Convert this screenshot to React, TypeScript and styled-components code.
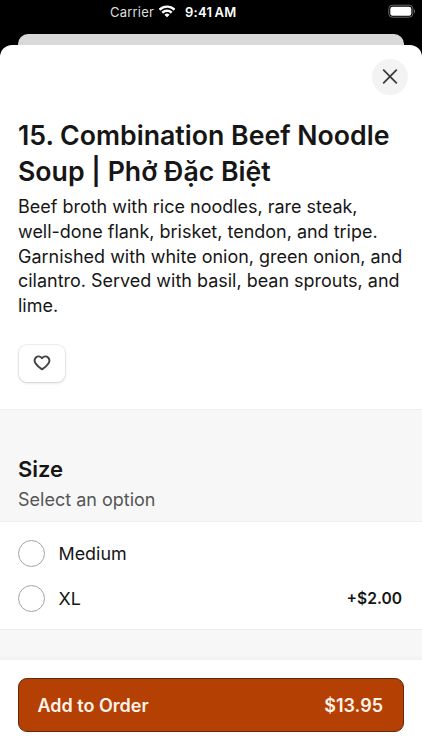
import React from 'react';
import styled, { createGlobalStyle } from 'styled-components';

const GlobalStyle = createGlobalStyle`
  *, *::before, *::after { box-sizing: border-box; }
  body { margin: 0; background: #000; }
  button { font: inherit; color: inherit; border: 0; padding: 0; margin: 0; }
  h1, h2, p { margin: 0; }
`;

const Screen = styled.div`
  width: 422px;
  height: 750px;
  overflow: hidden;
  display: flex;
  flex-direction: column;
  background: #000;
  color: #161616;
  font-family: Inter, 'Liberation Sans', sans-serif;
`;

const StatusBar = styled.div`
  height: 34px;
  padding: 4px 7px 0 110px;
  display: flex;
  align-items: flex-start;
  color: #fff;
  font-size: 13px;
  line-height: 16px;
  flex: none;
`;

const Carrier = styled.span`
  width: 48px;
  color: #dedede;
  letter-spacing: 0.2px;
  white-space: nowrap;
`;

const WifiIcon = styled.svg`
  width: 18px;
  height: 14px;
  margin-top: 1px;
`;

const Clock = styled.span`
  margin-left: 9px;
  font-weight: 600;
  letter-spacing: 0.25px;
  word-spacing: -1.2px;
  white-space: nowrap;
`;

const BatteryIcon = styled.svg`
  width: 28px;
  height: 14px;
  margin-left: auto;
`;

const BackSheet = styled.div`
  height: 11px;
  margin: 0 18px;
  border-radius: 10px 10px 0 0;
  background: #d9d9d9;
  flex: none;
`;

const Sheet = styled.main`
  flex: 1;
  min-height: 0;
  display: flex;
  flex-direction: column;
  border-radius: 12px 12px 0 0;
  background: #fff;
`;

const SheetHeader = styled.div`
  height: 72px;
  padding: 14px 14px 0;
  display: flex;
  justify-content: flex-end;
  flex: none;
`;

const CloseButton = styled.button`
  width: 36px;
  height: 36px;
  display: grid;
  place-items: center;
  border-radius: 50%;
  background: #f3f3f3;
`;

const Details = styled.section`
  height: 292px;
  padding: 0 18px;
  flex: none;
`;

const Title = styled.h1`
  font-size: 26.7px;
  line-height: 36px;
  font-weight: 600;
  white-space: nowrap;
`;

const Description = styled.p`
  margin-top: 6px;
  font-size: 17.98px;
  line-height: 24.8px;
  white-space: nowrap;
`;

const FavoriteButton = styled.button`
  width: 46px;
  height: 37px;
  margin-top: 26px;
  margin-left: 1px;
  display: grid;
  place-items: center;
  border-radius: 8px;
  background: #fff;
  box-shadow: 0 0 0 1px rgba(0, 0, 0, 0.05), 0 1px 3px rgba(0, 0, 0, 0.16);
`;

const GroupHeader = styled.header`
  height: 113px;
  padding: 44px 18px 0;
  border-top: 1px solid #efefef;
  border-bottom: 1px solid #efefef;
  background: #f7f7f7;
  flex: none;
`;

const GroupTitle = styled.h2`
  font-size: 22px;
  line-height: 30px;
  font-weight: 600;
`;

const GroupHint = styled.p`
  margin-top: 1px;
  font-size: 18px;
  line-height: 30px;
  color: #555;
`;

const Options = styled.div`
  height: 107px;
  padding: 9px 20px 0 18px;
  flex: none;
`;

const Option = styled.label`
  height: 45px;
  display: flex;
  align-items: center;
  font-size: 17.9px;
`;

const Radio = styled.span`
  width: 27px;
  height: 27px;
  margin-right: 13.5px;
  border: 1px solid #a3a3a3;
  border-radius: 50%;
`;

const Surcharge = styled.span`
  margin-left: auto;
  font-size: 15.6px;
  font-weight: 600;
`;

const Spacer = styled.div`
  height: 31px;
  border-top: 1px solid #ececec;
  background: linear-gradient(#f7f7f7 85%, #f1f1f1);
  flex: none;
`;

const Footer = styled.footer`
  flex: 1;
  padding: 18px 18px 0;
`;

const OrderButton = styled.button`
  width: 100%;
  height: 54px;
  padding: 0 20px 0 18.5px;
  display: flex;
  align-items: center;
  justify-content: space-between;
  border: 1px solid #64280a;
  border-radius: 9px;
  background: #b54004;
  color: #fff3ea;
  font-size: 18px;
  font-weight: 600;
`;

const sizes = [
  { name: 'Medium', extra: '' },
  { name: 'XL', extra: '+$2.00' },
];

export default function App() {
  return (
    <>
      <GlobalStyle />
      <Screen>
        <StatusBar>
          <Carrier>Carrier</Carrier>
          <WifiIcon viewBox="0 0 17 13" fill="#fff">
            <path d="M8.5 2.6c2.3 0 4.4.9 6 2.4.1.1.3.1.4 0l1.2-1.2c.1-.1.1-.3 0-.5a11 11 0 0 0-15.2 0c-.1.2-.1.4 0 .5L2.1 5c.1.1.3.1.4 0a8.7 8.7 0 0 1 6-2.4z" />
            <path d="M8.5 6.5c1.3 0 2.5.5 3.4 1.3.1.1.3.1.5 0l1.1-1.2c.2-.1.2-.3 0-.5a7.3 7.3 0 0 0-10 0c-.2.2-.2.4 0 .5l1.1 1.2c.2.1.4.1.5 0A5 5 0 0 1 8.5 6.5z" />
            <path d="M10.7 9.3c.2-.2.2-.4 0-.5a3.5 3.5 0 0 0-4.4 0c-.2.1-.2.3 0 .5l1.9 1.9c.2.2.4.2.6 0z" />
          </WifiIcon>
          <Clock>9:41 AM</Clock>
          <BatteryIcon viewBox="0 0 28 14">
            <rect x="1.8" y="1.2" width="24" height="12" rx="3.5" fill="none" stroke="#696969" />
            <rect x="3.3" y="2.7" width="21" height="9" rx="2.2" fill="#fff" />
            <path d="M27 5.2v4c1.3-.6 1.3-3.4 0-4z" fill="#696969" />
          </BatteryIcon>
        </StatusBar>
        <BackSheet />
        <Sheet>
          <SheetHeader>
            <CloseButton aria-label="Close">
              <svg width="16" height="16" viewBox="0 0 16 16" fill="none" stroke="#3b3b3b" strokeWidth="1.8" strokeLinecap="round">
                <path d="M1.7 1.2l12.6 12.6M14.3 1.2L1.7 13.8" />
              </svg>
            </CloseButton>
          </SheetHeader>
          <Details>
            <Title>
              15. Combination Beef Noodle
              <br />
              Soup | Phở Đặc Biệt
            </Title>
            <Description>
              Beef broth with rice noodles, rare steak,
              <br />
              well-done flank, brisket, tendon, and tripe.
              <br />
              Garnished with white onion, green onion, and
              <br />
              cilantro. Served with basil, bean sprouts, and
              <br />
              lime.
            </Description>
            <FavoriteButton aria-label="Save to favorites">
              <svg width="18" height="16" viewBox="0 0 18 16" fill="none" stroke="#444" strokeWidth="1.9" strokeLinejoin="round">
                <path d="M9 3.2C7.5 1 4.5.9 2.9 2.5 1.3 4.2 1.4 6.6 2.6 8.4 4 10.6 6.5 12.7 9 14.4c2.5-1.7 5-3.8 6.4-6 1.2-1.8 1.3-4.2-.3-5.9C13.5.9 10.5 1 9 3.2z" />
              </svg>
            </FavoriteButton>
          </Details>
          <GroupHeader>
            <GroupTitle>Size</GroupTitle>
            <GroupHint>Select an option</GroupHint>
          </GroupHeader>
          <Options>
            {sizes.map((size) => (
              <Option key={size.name}>
                <Radio />
                {size.name}
                {size.extra && <Surcharge>{size.extra}</Surcharge>}
              </Option>
            ))}
          </Options>
          <Spacer />
          <Footer>
            <OrderButton>
              <span>Add to Order</span>
              <span>$13.95</span>
            </OrderButton>
          </Footer>
        </Sheet>
      </Screen>
    </>
  );
}
